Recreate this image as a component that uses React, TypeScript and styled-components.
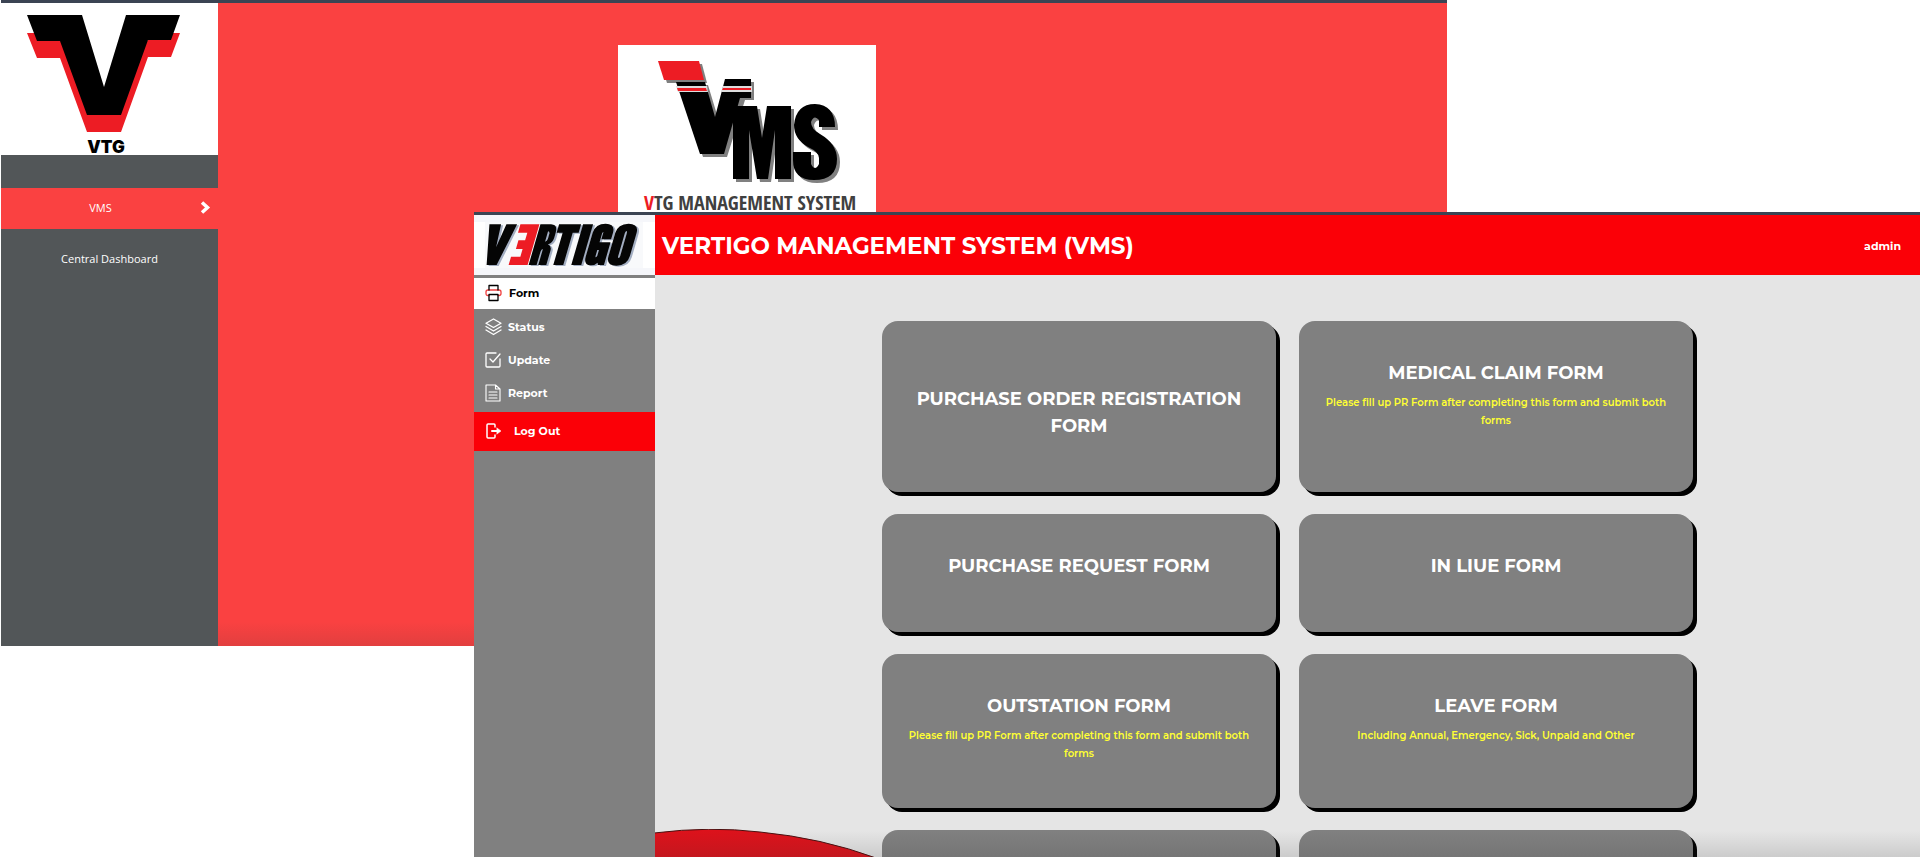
import React from 'react';
import styled, { createGlobalStyle } from 'styled-components';

const Global = createGlobalStyle`
  *, *::before, *::after { box-sizing: border-box; }
  body { margin: 0; background: #fff; font-family: 'Open Sans', 'Noto Sans', sans-serif; }
  #root { min-height: 100vh; }
  h1, h2, p, ul { margin: 0; padding: 0; }
`;

const Desktop = styled.div`
  position: relative;
  height: 100vh;
  overflow: hidden;
`;

const Window = styled.div`
  position: absolute;
  display: flex;
  flex-direction: column;
  border-top: 3px solid #3b4453;
`;

const HomeWindow = styled(Window)`
  top: 0;
  left: 1px;
  right: 473px;
  bottom: 211px;
  flex-direction: row;
  background: #fa4141;
`;

const FormWindow = styled(Window)`
  top: 212px;
  left: 474px;
  right: 0;
  bottom: 0;
`;

const HomeSidebar = styled.aside`
  flex: 0 0 217px;
  background: #525658;
`;

const HomeLogo = styled.div`
  height: 152px;
  background: #fff;
  margin-bottom: 33px;
  svg { display: block; width: 100%; height: 100%; overflow: visible; }
`;

const HomeLink = styled.a<{ $active?: boolean }>`
  display: grid;
  grid-template-columns: 12px 1fr 12px;
  align-items: center;
  height: 41px;
  margin-bottom: 10px;
  padding: 0 6px 2px;
  background: ${p => (p.$active ? '#fa4141' : 'transparent')};
  color: #fff;
  font-size: 11px;
  text-align: center;
  text-decoration: none;
  span { grid-column: 2; padding-right: ${p => (p.$active ? '18px' : '0')}; }
`;

const HomeMain = styled.main`
  flex: 1;
  display: flex;
  justify-content: center;
  align-items: flex-start;
  padding: 42px 172px 0 0;
  background: linear-gradient(to bottom, transparent calc(100% - 24px), rgba(60, 50, 50, 0.13)) #fa4141;
`;

const VmsCard = styled.div`
  width: 258px;
  height: 172px;
  background: #fff;
  svg { display: block; overflow: visible; }
`;

const TopRow = styled.header`
  display: flex;
  height: 60px;
`;

const Brand = styled.div`
  flex: 0 0 181px;
  background: #f5f6fa;
  svg { display: block; }
`;

const TitleBar = styled.div`
  flex: 1;
  display: flex;
  align-items: center;
  justify-content: space-between;
  padding: 2px 19px 0 7px;
  background: #fb0007;
  color: #fff;
  font-weight: 700;
`;

const Title = styled.h1`
  font: 700 23px/32px Montserrat, 'Open Sans', sans-serif;
`;

const User = styled.span`
  font: 700 11px/18px Montserrat, 'Open Sans', sans-serif;
`;

const Body = styled.div`
  flex: 1;
  display: flex;
  min-height: 0;
`;

const Sidebar = styled.nav`
  flex: 0 0 181px;
  padding-top: 3px;
  background: #808080;
`;

const Menu = styled.ul`
  list-style: none;
`;

const kinds = {
  plain: { height: 33, gap: 6, margin: '0', background: 'transparent', color: '#fff' },
  active: { height: 31, gap: 7, margin: '0 0 2px', background: '#fff', color: '#000' },
  logout: { height: 39, gap: 12, margin: '2px 0 0', background: '#fb0007', color: '#fff' },
};

const MenuLink = styled.a<{ $kind?: keyof typeof kinds }>`
  display: flex;
  align-items: center;
  gap: ${p => kinds[p.$kind ?? 'plain'].gap}px;
  height: ${p => kinds[p.$kind ?? 'plain'].height}px;
  margin: ${p => kinds[p.$kind ?? 'plain'].margin};
  padding: 0 0 2px 11px;
  background: ${p => kinds[p.$kind ?? 'plain'].background};
  color: ${p => kinds[p.$kind ?? 'plain'].color};
  font: 700 11px/16px Montserrat, 'Open Sans', sans-serif;
  text-decoration: none;
  svg { flex: none; }
`;

const Main = styled.main`
  position: relative;
  flex: 1;
  overflow: hidden;
  background: #e5e5e5;
  &::after {
    content: '';
    position: absolute;
    inset: auto 0 0 0;
    height: 26px;
    background: linear-gradient(to bottom, transparent, rgba(50, 50, 50, 0.14));
  }
`;

const Swoosh = styled.svg`
  position: absolute;
  left: 0;
  bottom: 0;
`;

const CardGrid = styled.div`
  position: relative;
  width: 811px;
  margin: 46px auto 0;
  display: grid;
  grid-template-columns: 1fr 1fr;
  gap: 22px 23px;
`;

const Card = styled.a<{ $tall?: boolean }>`
  display: block;
  min-height: 118px;
  padding: ${p => (p.$tall ? '65px' : '39px')} 24px 45px;
  border-radius: 16px;
  background: #808080;
  box-shadow: 4px 4px 0 #000;
  text-align: center;
  text-decoration: none;
`;

const CardTitle = styled.h2`
  margin-bottom: 7px;
  color: #fff;
  font: 700 18px/27px Montserrat, 'Open Sans', sans-serif;
`;

const CardNote = styled.p`
  color: #ffff33;
  font: 600 10px/18px Montserrat, 'Open Sans', sans-serif;
`;

const cards = [
  { title: 'PURCHASE ORDER REGISTRATION FORM', tall: true },
  { title: 'MEDICAL CLAIM FORM', note: 'Please fill up PR Form after completing this form and submit both forms' },
  { title: 'PURCHASE REQUEST FORM' },
  { title: 'IN LIUE FORM' },
  { title: 'OUTSTATION FORM', note: 'Please fill up PR Form after completing this form and submit both forms' },
  { title: 'LEAVE FORM', note: 'Including Annual, Emergency, Sick, Unpaid and Other' },
  {},
  {},
];

const VtgLogo = () => (
  <svg viewBox="1 3 217 152" role="img" aria-label="VTG">
    <path d="M27 33H40L62 41L103 98L148 40L173 33H180L171 57H148L121 132H87L60 58H37Z" fill="#ed1c24" />
    <path d="M27 15H82L104 87L126 15H180L171 40H148L121 115H87L60 41H37Z" fill="#000" />
    <text x="106" y="153" textAnchor="middle" fontFamily="Inter, sans-serif" fontWeight="900" fontSize="17">VTG</text>
  </svg>
);

const VmsLogo = () => (
  <svg width="258" height="172" viewBox="618 45 258 172" role="img" aria-label="VTG Management System">
    <g fill="#808080" transform="translate(3 3)">
      <path d="M658 61H699L704 80H664Z" />
      <path d="M676 82H705L715 115L725 79H751V97H742L724 154H700Z" />
      <path d="M733 179V106H757L762 138L767 106H791V179H775V130L768 179H757L749 130V179Z" />
      <path d="M835 127H819V120Q814 114 811 122Q811 129 820 134Q837 144 837 159Q837 180 814 180Q793 180 793 160V152H811V164Q815 172 819 164V158Q819 152 808 147Q794 139 794 125Q796 104 815 104Q835 105 835 127Z" />
    </g>
    <path d="M676 82H705L715 117L725 79H751V98H740L724 154H700Z" />
    <path d="M733 179V106H757L762 138L767 106H791V179H775V130L768 179H757L749 130V179Z" />
    <path d="M835 127H819V120Q814 114 811 122Q811 129 820 134Q837 144 837 159Q837 180 814 180Q793 180 793 160V152H811V164Q815 172 819 164V158Q819 152 808 147Q794 139 794 125Q796 104 815 104Q835 105 835 127Z" />
    <path d="M658 61H699L704 80H664Z" fill="#ed1c24" />
    <path d="M676 86H707L708 92H678ZM723 86H752V92H721Z" fill="#ddd" />
    <path d="M677 88H706L707 91H678ZM723 88H751V90H722Z" fill="#ed1c24" />
    <text x="644" y="210" fontFamily="'Open Sans Condensed', 'Open Sans', sans-serif" fontStretch="condensed" fontWeight="800" fontSize="20" fill="#404040">
      <tspan fill="#ed1c24">V</tspan>TG MANAGEMENT SYSTEM
    </text>
  </svg>
);

const VertigoLogo = () => (
  <svg width="181" height="60" viewBox="474 215 181 60" role="img" aria-label="Vertigo">
    <path d="M474 222H655V268H474Z" fill="#fff" />
    <path d="M485 222H643V268H485Z" fill="#f8f9fb" />
    <defs>
      <g id="vertigo-mark" transform="translate(460 200) scale(.3333) translate(56.500 0) skewX(-16.200)">
        <path d="M53 73H88L93 142L104 73H136L110 195H80Z" />
        <path d="M206 73H238Q259 74 259 98V113Q259 128 246 133Q259 138 259 152V195H230V155Q230 147 235 147V195H206ZM235 94V125Q241 124 241 117V102Q241 95 235 94Z" fillRule="evenodd" />
        <path d="M262 73H328V98H310V195H280V98H262Z" />
        <path d="M334 73H364V195H334Z" />
        <path d="M431 118H402V100Q402 92 399 100V168Q400 176 404 168V150H398V127H432V195H414L411 188Q404 197 392 196Q370 194 370 170V98Q371 71 401 71Q431 72 431 98Z" />
        <path d="M470 71Q502 72 502 99V169Q502 197 470 197Q438 197 438 169V99Q438 72 470 71ZM470 93Q467 94 467 100V168Q467 174 470 174Q473 174 473 168V100Q473 94 470 93Z" fillRule="evenodd" />
      </g>
    </defs>
    <use href="#vertigo-mark" x="2" y="1" fill="#a3aec2" />
    <use href="#vertigo-mark" fill="#050505" />
    <path transform="translate(460 200) scale(.3333) translate(56.500 0) skewX(-16.200)" d="M146 73H203V195H146V170H174V147H154V121H174V98H146Z" fill="#ed1c24" />
  </svg>
);

const Icon = ({ children, color = '#fff' }: { children: React.ReactNode; color?: string }) => (
  <svg width="17" height="18" viewBox="0 0 17 18" fill="none" stroke={color} strokeWidth="1.3" strokeLinejoin="round" strokeLinecap="round" aria-hidden="true">
    {children}
  </svg>
);

export default function App() {
  return (
    <>
      <Global />
      <Desktop>
        <HomeWindow>
          <HomeSidebar>
            <HomeLogo><VtgLogo /></HomeLogo>
            <HomeLink href="#vms" $active>
              <span>VMS</span>
              <svg width="11" height="13" viewBox="0 0 11 13" fill="none" stroke="#fff" strokeWidth="3.500" aria-hidden="true"><path d="M2 1.500L7.500 6.500L2 11.500" /></svg>
            </HomeLink>
            <HomeLink href="#dashboard"><span>Central Dashboard</span></HomeLink>
          </HomeSidebar>
          <HomeMain><VmsCard><VmsLogo /></VmsCard></HomeMain>
        </HomeWindow>

        <FormWindow>
          <TopRow>
            <Brand><VertigoLogo /></Brand>
            <TitleBar>
              <Title>VERTIGO MANAGEMENT SYSTEM (VMS)</Title>
              <User>admin</User>
            </TitleBar>
          </TopRow>
          <Body>
            <Sidebar>
              <Menu>
                <li><MenuLink href="#form" $kind="active">
                  <Icon color="#000">
                    <path d="M4 11.500H3Q1 11.500 1 9.500V8Q1 6 3 6H14Q16 6 16 8V9.500Q16 11.500 14 11.500H13" stroke="#f04040" />
                    <path d="M4 6V1.500H13V6M4 10.500H13V16.500H4Z" />
                  </Icon>Form
                </MenuLink></li>
                <li><MenuLink href="#status">
                  <Icon><path d="M8.500 1L16 5.200L8.500 9.500L1 5.200ZM1 8.500L8.500 13L16 8.500M1 12L8.500 16.500L16 12" /></Icon>Status
                </MenuLink></li>
                <li><MenuLink href="#update">
                  <Icon><path d="M11 2H2Q1 2 1 3V15Q1 16 2 16H14Q15 16 15 15V8M5 8L8 11L15 3" /></Icon>Update
                </MenuLink></li>
                <li><MenuLink href="#report">
                  <Icon><path d="M1 1H10.500L15 5V17H1ZM10.500 1V5H15M4 8H12M4 11H12M4 14H12" strokeWidth="1.1" /></Icon>Report
                </MenuLink></li>
                <li><MenuLink href="#logout" $kind="logout">
                  <Icon><path d="M10 5V3Q10 2 9 2H3Q2 2 2 3V15Q2 16 3 16H9Q10 16 10 15V13" strokeWidth="1.5" /><path d="M7 9H13" strokeWidth="2" /><path d="M12 6L16 9L12 12Z" fill="#fff" strokeWidth="0.5" /></Icon>Log Out
                </MenuLink></li>
              </Menu>
            </Sidebar>
            <Main>
              <Swoosh width="224" height="28" viewBox="655 829 224 28" aria-hidden="true">
                <path d="M654 833Q710 826 760 832Q822 838 876 858H654Z" fill="#dc121b" stroke="#4a1010" />
              </Swoosh>
              <CardGrid>
                {cards.map((c, i) => (
                  <Card key={i} href="#form" $tall={c.tall}>
                    {c.title && <CardTitle>{c.title}</CardTitle>}
                    {c.note && <CardNote>{c.note}</CardNote>}
                  </Card>
                ))}
              </CardGrid>
            </Main>
          </Body>
        </FormWindow>
      </Desktop>
    </>
  );
}
